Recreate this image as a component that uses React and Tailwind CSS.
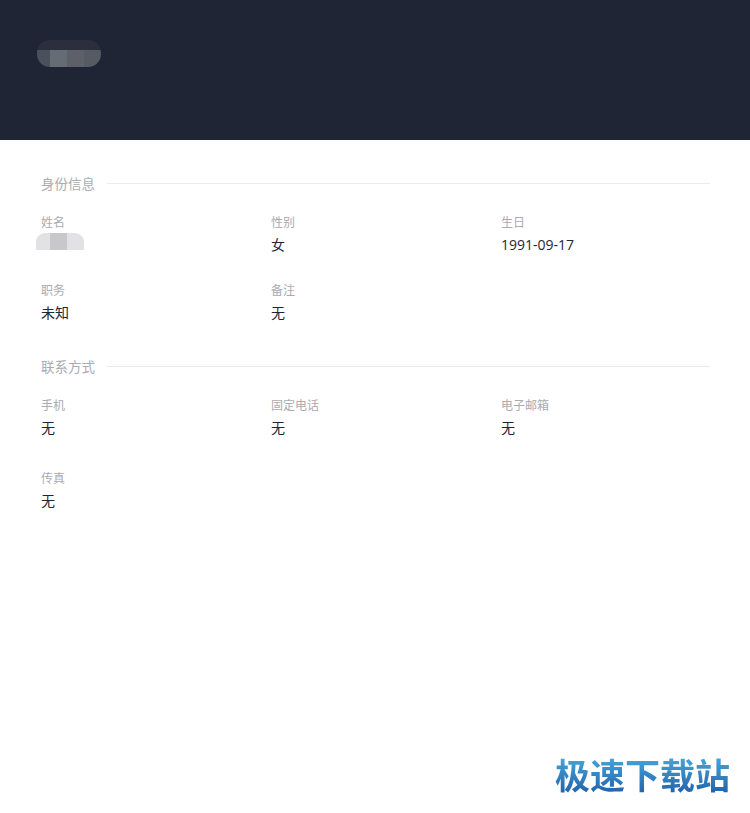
const Field = ({ label, children, className = "" }) => (
  <div className={"flex flex-col " + className}>
    <div className="text-[12px] leading-[16px] text-[#a9abb2]">{label}</div>
    <div className="mt-[2px] text-[14px] leading-[24px] text-[#1f2535]">{children}</div>
  </div>
);

const Section = ({ title, children }) => (
  <section>
    <div className="flex items-center">
      <h2 className="text-[13.5px] leading-[20px] font-normal text-[#a9abb2]">{title}</h2>
      <div className="ml-3 mb-[2px] h-px flex-1 bg-[#ebebed]" />
    </div>
    {children}
  </section>
);

export default function App() {
  return (
    <div
      className="relative flex h-[813px] w-[750px] flex-col overflow-hidden bg-white"
      style={{ fontFamily: '"Open Sans", "Noto Sans CJK SC", sans-serif' }}
    >
      <header className="h-[140px] bg-[#1f2535] pl-[37px] pt-[40px]">
        <div className="flex h-[27px] w-[64px] flex-col overflow-hidden rounded-[13px] bg-[#2b2f3d]">
          <div className="h-[10px]" />
          <div className="flex h-[17px]">
            <div className="w-[13px] bg-[#4a505c]" />
            <div className="w-[17px] bg-[#666c74]" />
            <div className="w-[17px] bg-[#5d6068]" />
            <div className="w-[17px] bg-[#555a63]" />
          </div>
        </div>
      </header>

      <main className="px-[41px] pr-[40px] pt-[34px]">
        <Section title="身份信息">
          <div className="mt-[21px] grid grid-cols-[230px_230px_1fr] gap-y-[26px]">
            <Field label="姓名">
              <div className="-ml-[5px] flex h-[17px] w-[48px] overflow-hidden rounded-t-[9px] bg-[#e2e2e4]">
                <div className="ml-[14px] w-[17px] bg-[#c8c8ca]" />
              </div>
            </Field>
            <Field label="性别">女</Field>
            <Field label="生日">1991-09-17</Field>
            <Field label="职务">未知</Field>
            <Field label="备注">无</Field>
          </div>
        </Section>
        <div className="mt-[32px]">
          <Section title="联系方式">
            <div className="mt-[21px] grid grid-cols-[230px_230px_1fr] gap-y-[31px]">
              <Field label="手机">无</Field>
              <Field label="固定电话">无</Field>
              <Field label="电子邮箱">无</Field>
              <Field label="传真">无</Field>
            </div>
          </Section>
        </div>
      </main>

      <div
        className="absolute left-[555px] top-[750px] bg-gradient-to-b from-[#4fb4e4] to-[#1f5aa5] bg-clip-text text-[35px] font-bold leading-[48px] text-transparent"
        style={{ fontFamily: '"Noto Sans CJK SC", sans-serif' }}
      >
        极速下载站
      </div>
    </div>
  );
}
